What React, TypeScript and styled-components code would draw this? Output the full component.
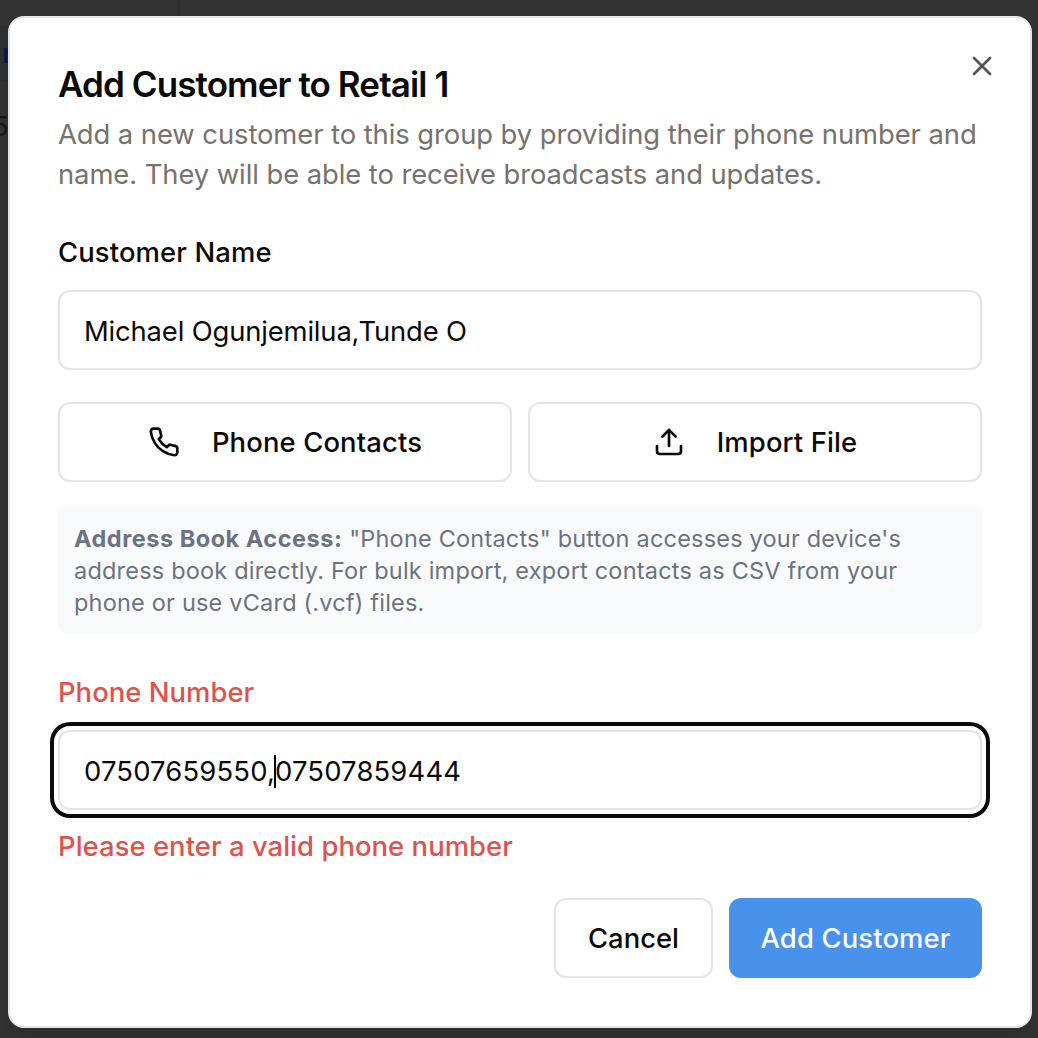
import React from "react";
import styled, { createGlobalStyle, css } from "styled-components";
import { Upload, X } from "lucide-react";

const GlobalStyle = createGlobalStyle`
  *, *::before, *::after { box-sizing: border-box; }
  body {
    margin: 0;
    background: #333333;
    font-family: Inter, "Liberation Sans", sans-serif;
    font-size: 27.4px;
    color: #0c0a09;
  }
  button { font: inherit; color: inherit; }
  h2, p { margin: 0; }
`;

const Screen = styled.main`
  position: relative;
  width: 1038px;
  height: 1038px;
  padding: 16px 6px 10px 8px;
  overflow: hidden;
  background: #333333;
`;

const Backdrop = styled.div`
  position: absolute;
  inset: 0;
  background: linear-gradient(to right, transparent 178px, #2e2e2e 178px, #2e2e2e 180px, transparent 180px) 0 0 / 100% 16px no-repeat;
`;

const BackdropRow = styled.div`
  position: absolute;
  left: 0;
  top: 26px;
  width: 20px;
  height: 56px;
  background: #303133;
  border-top: 2px solid #2a2f38;
  border-bottom: 2px solid #2a2f38;
  color: #0b1a4d;
  font-weight: 600;
  line-height: 50px;
  padding-left: 2px;
`;

const BackdropDigit = styled.div`
  position: absolute;
  left: -8px;
  top: 106px;
  color: #18181a;
  line-height: 40px;
`;

const Dialog = styled.section`
  position: relative;
  display: flex;
  flex-direction: column;
  height: 100%;
  padding: 48px;
  background: #ffffff;
  border: 2px solid #e5e5e5;
  border-radius: 16px;
  box-shadow: 0 20px 30px -6px rgba(0, 0, 0, 0.1), 0 8px 12px -8px rgba(0, 0, 0, 0.1);
`;

const CloseButton = styled.button`
  position: absolute;
  top: 32px;
  right: 32px;
  display: flex;
  padding: 0;
  border: 0;
  background: none;
  opacity: 0.7;
`;

const Header = styled.header`
  display: flex;
  flex-direction: column;
  gap: 12px;
`;

const Title = styled.h2`
  font-size: 35px;
  font-weight: 600;
  line-height: 36px;
  letter-spacing: -0.9px;
`;

const Description = styled.p`
  line-height: 40px;
  color: #78716c;
  letter-spacing: -0.07px;
  white-space: nowrap;
`;

const Field = styled.div`
  display: flex;
  flex-direction: column;
  gap: 24px;
  margin-top: 44px;
`;

const Label = styled.label<{ $invalid?: boolean }>`
  font-weight: 500;
  line-height: 28px;
  letter-spacing: ${(p) => (p.$invalid ? 0.05 : 0.13)}px;
  color: ${(p) => (p.$invalid ? "#df524d" : "inherit")};
`;

const TextBox = styled.div<{ $focused?: boolean; $tracking: number }>`
  display: flex;
  align-items: center;
  height: 80px;
  padding: 2px 24px 0;
  border: 2px solid #e5e5e5;
  border-radius: 12px;
  background: #ffffff;
  letter-spacing: ${(p) => p.$tracking}px;
  white-space: pre;
  ${(p) =>
    p.$focused &&
    css`
      box-shadow: 0 0 0 4px #ffffff, 0 0 0 8px #0c0a09;
    `}
`;

const Caret = styled.span`
  width: 2px;
  height: 33px;
  margin: 0 -1px;
  background: #000000;
`;

const ImportRow = styled.div`
  display: grid;
  grid-template-columns: 1fr 1fr;
  gap: 16px;
  margin-top: 32px;
`;

const Button = styled.button<{ $primary?: boolean }>`
  display: flex;
  align-items: center;
  justify-content: center;
  gap: 32px;
  height: 80px;
  padding: 0 32px;
  border: ${(p) => (p.$primary ? "0" : "2px solid #e5e5e5")};
  border-radius: 12px;
  background: ${(p) => (p.$primary ? "#4892eb" : "#ffffff")};
  color: ${(p) => (p.$primary ? "#fafaf9" : "inherit")};
  font-weight: 500;
  letter-spacing: 0.14px;
  white-space: nowrap;
`;

const Note = styled.p`
  margin-top: 24px;
  padding: 17px 16px 15px;
  border-radius: 8px;
  background: #f9fafc;
  color: #6b7280;
  font-size: 23.5px;
  line-height: 32px;
  letter-spacing: 0.2px;
  white-space: nowrap;

  strong {
    letter-spacing: 0.52px;
  }
`;

const ErrorText = styled.p`
  margin-top: 16px;
  font-weight: 500;
  line-height: 40px;
  letter-spacing: 0.06px;
  color: #df524d;
`;

const Footer = styled.footer`
  display: flex;
  justify-content: flex-end;
  gap: 16px;
  margin-top: 32px;
`;

const CancelButton = styled(Button)`
  width: 159px;
  letter-spacing: 0;
`;

const SubmitButton = styled(Button)`
  width: 253px;
`;

function PhoneIcon() {
  return (
    <svg
      width="32"
      height="32"
      viewBox="0 0 24 24"
      fill="none"
      stroke="currentColor"
      strokeWidth="2"
      strokeLinecap="round"
      strokeLinejoin="round"
    >
      <path d="M22 16.92v3a2 2 0 0 1-2.18 2 19.79 19.79 0 0 1-8.63-3.07 19.5 19.5 0 0 1-6-6 19.79 19.79 0 0 1-3.07-8.67A2 2 0 0 1 4.11 2h3a2 2 0 0 1 2 1.72 12.84 12.84 0 0 0 .7 2.81 2 2 0 0 1-.45 2.11L8.09 9.91a16 16 0 0 0 6 6l1.27-1.27a2 2 0 0 1 2.11-.45 12.84 12.84 0 0 0 2.81.7A2 2 0 0 1 22 16.92z" />
    </svg>
  );
}

export default function App() {
  return (
    <Screen>
      <GlobalStyle />
      <Backdrop>
        <BackdropRow>r</BackdropRow>
        <BackdropDigit>5</BackdropDigit>
      </Backdrop>
      <Dialog role="dialog">
        <CloseButton aria-label="Close">
          <X size={32} />
        </CloseButton>
        <Header>
          <Title>Add Customer to Retail 1</Title>
          <Description>
            Add a new customer to this group by providing their phone number and
            <br />
            name. They will be able to receive broadcasts and updates.
          </Description>
        </Header>
        <Field>
          <Label>Customer Name</Label>
          <TextBox $tracking={-0.15}>Michael Ogunjemilua,Tunde O</TextBox>
        </Field>
        <ImportRow>
          <Button>
            <PhoneIcon />
            Phone Contacts
          </Button>
          <Button>
            <Upload size={32} />
            Import File
          </Button>
        </ImportRow>
        <Note>
          <strong>Address Book Access:</strong> "Phone Contacts" button accesses your device's
          <br />
          address book directly. For bulk import, export contacts as CSV from your
          <br />
          phone or use vCard (.vcf) files.
        </Note>
        <Field>
          <Label $invalid>Phone Number</Label>
          <TextBox $focused $tracking={0.18}>
            <span>07507659550,</span>
            <Caret />
            <span>07507859444</span>
          </TextBox>
        </Field>
        <ErrorText>Please enter a valid phone number</ErrorText>
        <Footer>
          <CancelButton>Cancel</CancelButton>
          <SubmitButton $primary>Add Customer</SubmitButton>
        </Footer>
      </Dialog>
    </Screen>
  );
}
